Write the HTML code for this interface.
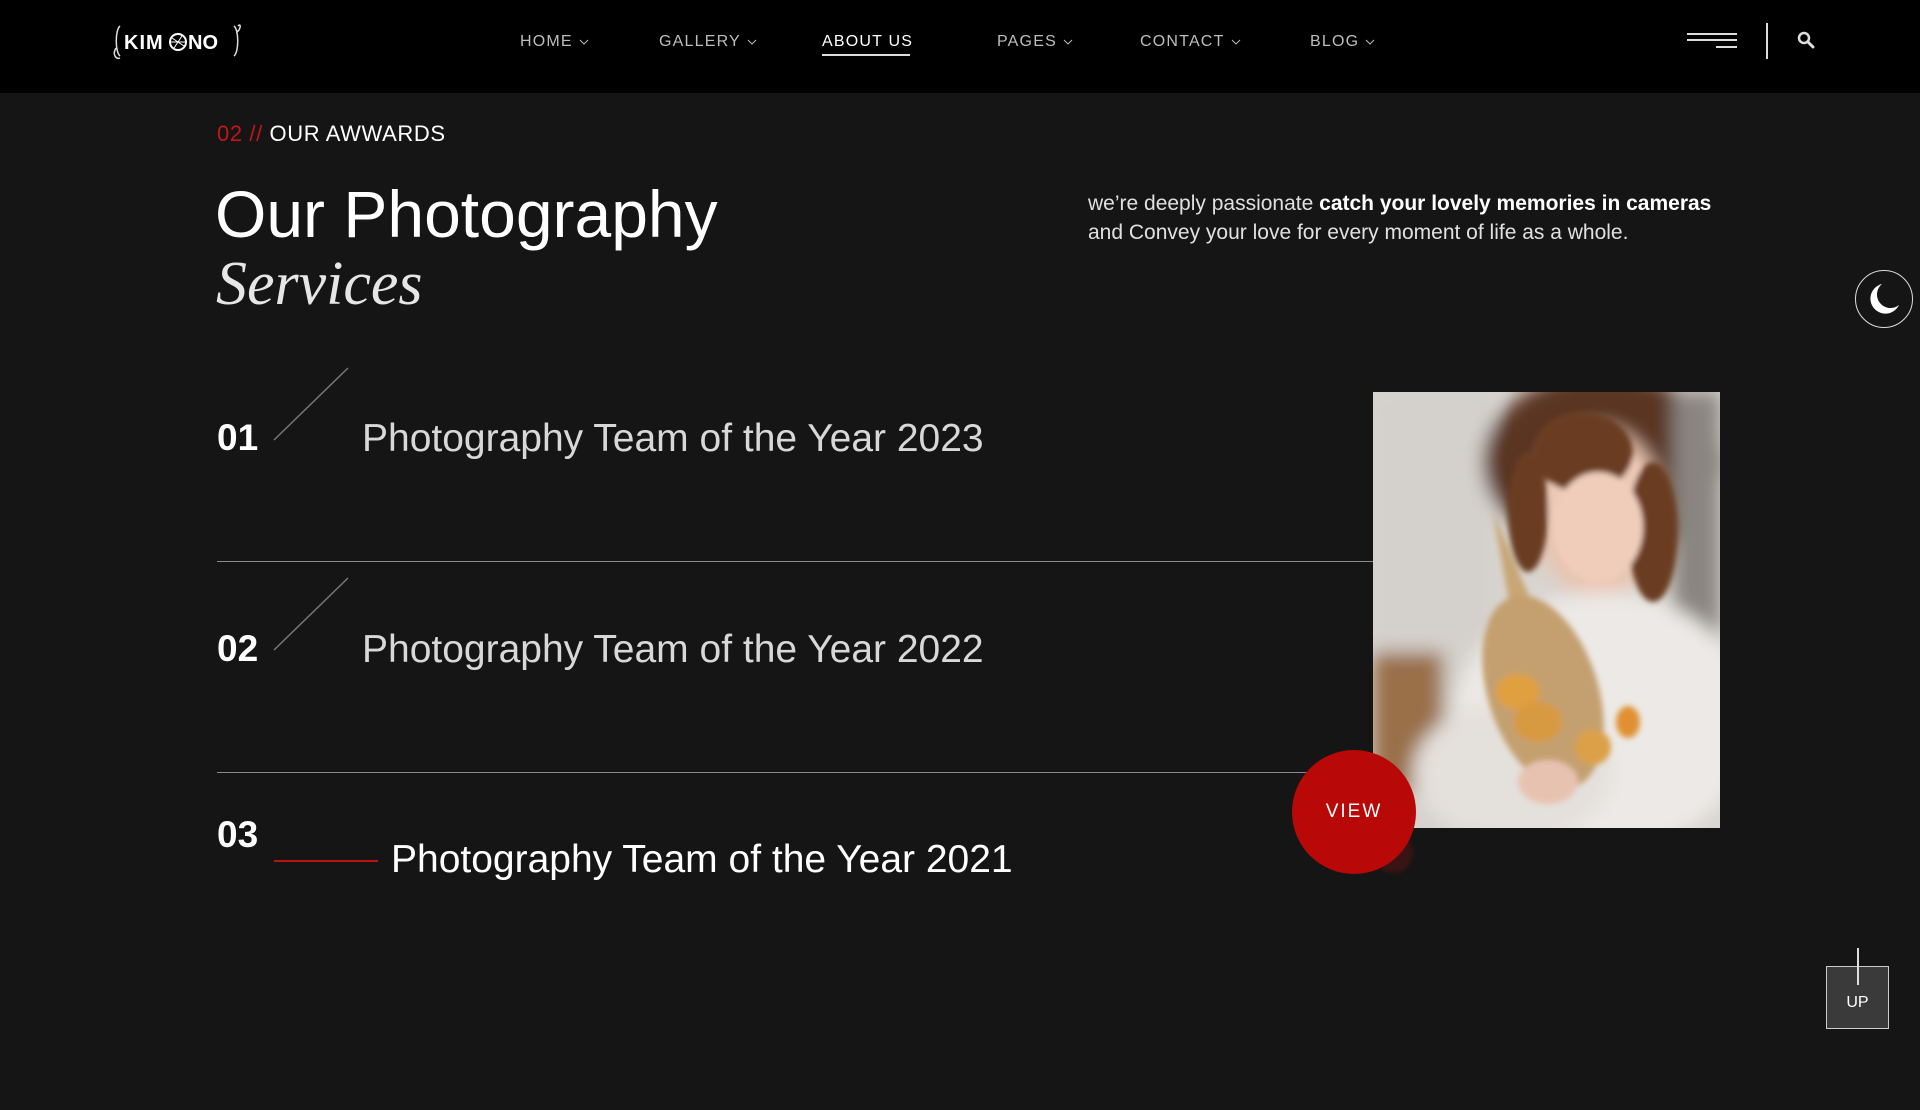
<!DOCTYPE html>
<html><head><meta charset="utf-8">
<style>
*{margin:0;padding:0;box-sizing:border-box}
html,body{width:1920px;height:1110px;overflow:hidden;background:#151515;font-family:"Liberation Sans",sans-serif;color:#fff}
.nav{position:absolute;left:0;top:0;width:1920px;height:93px;background:#000}
.nav a{position:absolute;top:33px;font-size:16px;letter-spacing:1.2px;color:#bdbdbd;text-decoration:none;white-space:nowrap}
.nav a svg{margin-left:6px;vertical-align:middle}
.abs{position:absolute}
.title{font-size:39px;color:#d8d8d8;white-space:nowrap}
.num{font-size:37px;font-weight:bold;color:#fff}
.hl{position:absolute;height:1px;background:#8a8a8a}
</style></head><body>
<div class="nav">
  <svg class="abs" style="left:112px;top:22px" width="130" height="40" viewBox="0 0 130 40">
    <path d="M8 4 C3 8 3 30 8 34 M4 26 C0 32 4 38 8 36 M122 4 C127 8 127 30 122 34 M126 4 C130 0 128 10 124 10" stroke="#ddd" stroke-width="1.5" fill="none"/>
    <text x="12" y="27" font-family="Liberation Sans" font-size="20" font-weight="bold" fill="#fff" letter-spacing="1">KIM</text>
    <circle cx="66" cy="20" r="8" stroke="#fff" stroke-width="2" fill="none"/>
    <path d="M60 16 L72 24 M62 26 L70 14 M58 20 H74" stroke="#fff" stroke-width="1"/>
    <text x="76" y="27" font-family="Liberation Sans" font-size="20" font-weight="bold" fill="#fff">NO</text>
  </svg>
  <a style="left:520px">HOME<svg width="10" height="6"><path d="M1 1 L5 5 L9 1" stroke="#bbb" fill="none"/></svg></a>
  <a style="left:659px">GALLERY<svg width="10" height="6"><path d="M1 1 L5 5 L9 1" stroke="#bbb" fill="none"/></svg></a>
  <a style="left:822px;color:#fff">ABOUT US</a>
  <div class="abs" style="left:822px;top:54px;width:88px;height:2px;background:#ddd"></div>
  <a style="left:997px">PAGES<svg width="10" height="6"><path d="M1 1 L5 5 L9 1" stroke="#bbb" fill="none"/></svg></a>
  <a style="left:1140px">CONTACT<svg width="10" height="6"><path d="M1 1 L5 5 L9 1" stroke="#bbb" fill="none"/></svg></a>
  <a style="left:1310px">BLOG<svg width="10" height="6"><path d="M1 1 L5 5 L9 1" stroke="#bbb" fill="none"/></svg></a>
  <div class="abs" style="left:1687px;top:33px;width:50px;height:1.5px;background:#ddd"></div>
  <div class="abs" style="left:1687px;top:39px;width:50px;height:1.5px;background:#ddd"></div>
  <div class="abs" style="left:1716px;top:46px;width:21px;height:1.5px;background:#ddd"></div>
  <div class="abs" style="left:1766px;top:23px;width:2px;height:36px;background:#ddd"></div>
  <svg class="abs" style="left:1797px;top:31px" width="18" height="18" viewBox="0 0 18 18"><circle cx="7" cy="7" r="5" stroke="#ddd" stroke-width="2.5" fill="none"/><path d="M11 11 L16 16" stroke="#ddd" stroke-width="3" stroke-linecap="round"/></svg>
</div>

<div class="abs" style="left:217px;top:121px;font-size:22px;letter-spacing:0.6px"><span style="color:#c41616">02 //</span> OUR AWWARDS</div>
<div class="abs" style="left:215px;top:179px;font-size:66px;line-height:70px">Our Photography</div>
<div class="abs" style="left:216px;top:249px;font-size:62px;line-height:70px;font-family:'Liberation Serif',serif;font-style:italic;color:#e6e6e6">Services</div>
<div class="abs" style="left:1088px;top:189px;font-size:21px;line-height:29px;color:#e0e0e0;width:680px;white-space:nowrap">we’re deeply passionate <b style="color:#fff">catch your lovely memories in cameras</b><br>and Convey your love for every moment of life as a whole.</div>

<div class="abs" style="left:1855px;top:270px;width:58px;height:58px;border:1.5px solid #ddd;border-radius:50%"></div>
<svg class="abs" style="left:1866px;top:281px" width="36" height="36" viewBox="0 0 36 36"><path d="M16 3 A15 15 0 1 0 33 24 A12 12 0 1 1 16 3Z" fill="#fff"/></svg>

<div class="abs num" style="left:217px;top:417px">01</div>
<svg class="abs" style="left:270px;top:364px" width="84" height="80"><path d="M4 76 L78 4" stroke="#777" stroke-width="1.5"/></svg>
<div class="abs title" style="left:362px;top:417px">Photography Team of the Year 2023</div>
<div class="hl" style="left:217px;top:561px;width:1157px"></div>

<div class="abs num" style="left:217px;top:628px">02</div>
<svg class="abs" style="left:270px;top:574px" width="84" height="80"><path d="M4 76 L78 4" stroke="#777" stroke-width="1.5"/></svg>
<div class="abs title" style="left:362px;top:628px">Photography Team of the Year 2022</div>
<div class="hl" style="left:217px;top:772px;width:1100px"></div>

<div class="abs num" style="left:217px;top:814px">03</div>
<div class="abs" style="left:274px;top:860px;width:104px;height:2px;background:#b81414"></div>
<div class="abs title" style="left:391px;top:838px;color:#fff">Photography Team of the Year 2021</div>

<svg class="abs" style="left:1373px;top:392px" width="347" height="436" viewBox="0 0 347 436">
<defs><filter id="b" x="-20%" y="-20%" width="140%" height="140%"><feGaussianBlur stdDeviation="9"/></filter>
<filter id="b2"><feGaussianBlur stdDeviation="3"/></filter></defs>
<rect width="347" height="436" fill="#d8d4cf"/>
<g filter="url(#b)">
<rect x="0" y="0" width="120" height="436" fill="#d4d0cb"/>
<rect x="0" y="260" width="70" height="140" fill="#9a7048"/>
<ellipse cx="230" cy="70" rx="120" ry="90" fill="#5a3520"/>
<rect x="300" y="0" width="47" height="260" fill="#8a8580"/>
<ellipse cx="225" cy="120" rx="65" ry="85" fill="#e8c4b0"/>
<ellipse cx="230" cy="330" rx="150" ry="130" fill="#ece9e6"/>
<ellipse cx="140" cy="380" rx="100" ry="70" fill="#e4e0dc"/>
</g>
<g filter="url(#b2)">
<ellipse cx="225" cy="115" rx="50" ry="70" fill="#ecc8b6"/>
<ellipse cx="210" cy="60" rx="50" ry="40" fill="#6a3e22"/>
<ellipse cx="280" cy="140" rx="25" ry="70" fill="#6a3e22"/>
<ellipse cx="155" cy="120" rx="20" ry="60" fill="#6a3e22"/>
<ellipse cx="225" cy="135" rx="45" ry="55" fill="#f0cdbb"/>
<path d="M120 120 L210 330 L170 400 Z" fill="#c8a676"/>
<ellipse cx="170" cy="300" rx="55" ry="100" fill="#c4a070" transform="rotate(-18 170 300)"/>
<ellipse cx="145" cy="300" rx="22" ry="18" fill="#e0a040"/>
<ellipse cx="165" cy="330" rx="24" ry="20" fill="#d89a40"/>
<ellipse cx="220" cy="355" rx="18" ry="18" fill="#dca048"/>
<ellipse cx="255" cy="330" rx="12" ry="16" fill="#e09030"/>
<ellipse cx="175" cy="390" rx="30" ry="22" fill="#e8c2b0"/>
</g>
</svg>

<div class="abs" style="left:1373px;top:833px;width:40px;height:40px;border-radius:50%;background:#3a1414;filter:blur(2px)"></div>
<div class="abs" style="left:1292px;top:750px;width:124px;height:124px;border-radius:50%;background:#b80808;color:#fff;font-size:19px;letter-spacing:2px;text-align:center;line-height:124px">VIEW</div>

<div class="abs" style="left:1826px;top:966px;width:63px;height:63px;border:1.5px solid #ccc;background:#3a3a3a;color:#fff;font-size:16px;text-align:center;line-height:72px">UP</div>
<div class="abs" style="left:1857px;top:948px;width:2px;height:37px;background:#ddd"></div>
</body></html>
